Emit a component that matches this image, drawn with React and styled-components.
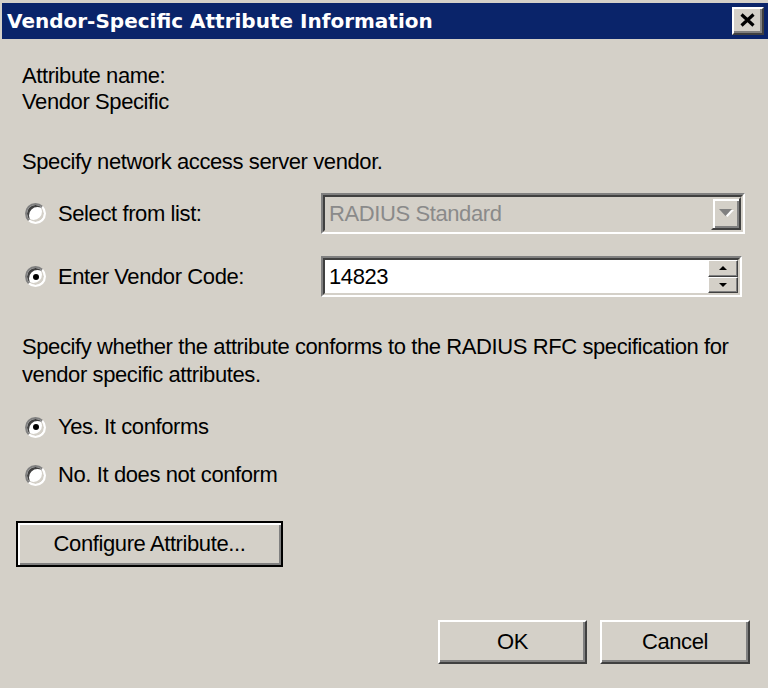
import React from "react";
import styled, { createGlobalStyle } from "styled-components";

const GlobalStyle = createGlobalStyle`
  html, body {
    margin: 0;
    padding: 0;
    background: #d4d0c8;
    overflow: hidden;
  }
  body {
    font-family: "Liberation Sans", Arial, sans-serif;
  }
`;

const Window = styled.div`
  width: 768px;
  height: 688px;
  box-sizing: border-box;
  padding: 3px 0 0 2px;
  background: #d4d0c8;
  display: flex;
  flex-direction: column;
`;

const TitleBar = styled.div`
  height: 36px;
  flex: none;
  background: #0a246a;
  display: flex;
  align-items: center;
  justify-content: space-between;
  padding: 0 4px 0 5px;
`;

const Title = styled.span`
  color: #fff;
  font-family: "DejaVu Sans", "Liberation Sans", sans-serif;
  font-weight: bold;
  font-size: 20px;
  white-space: nowrap;
`;

// classic raised bevel used by every push button
const bevel = `
  background: #d4d0c8;
  border: 2px solid;
  border-color: #fff #404040 #404040 #fff;
  box-shadow: inset -2px -2px 0 #808080;
`;

const CloseButton = styled.div`
  ${bevel}
  width: 32px;
  height: 28px;
  box-sizing: border-box;
  display: flex;
  align-items: center;
  justify-content: center;
  padding: 0 2px 2px 0;
`;

const Body = styled.div`
  flex: 1;
  display: flex;
  flex-direction: column;
  padding: 24px 16px 0 14px;
`;

const Line = styled.div`
  display: flex;
  align-items: center;
  height: ${(p) => p.$lh || 26}px;
  padding-left: 6px;
  margin-top: ${(p) => p.$mt || 0}px;
`;

const Text = styled.span`
  font-size: 22px;
  letter-spacing: -0.4px;
  white-space: nowrap;
  color: ${(p) => (p.$muted ? "#8a8a8a" : "#000")};
`;

const Choices = styled.div`
  display: grid;
  grid-template-columns: 305px 424px;
  grid-auto-rows: 41px;
  row-gap: 22px;
  margin-top: 18px;
`;

const RadioRow = styled.label`
  display: flex;
  align-items: center;
  gap: 12px;
  padding-left: 9px;
  height: ${(p) => (p.$h ? `${p.$h}px` : "auto")};
  margin-top: ${(p) => p.$mt || 0}px;
`;

const Radio = styled.span`
  flex: none;
  width: 21px;
  height: 21px;
  box-sizing: border-box;
  border-radius: 50%;
  border: 2px solid;
  border-color: #808080 #fff #fff #808080;
  background: #fff;
  box-shadow: inset 2px 2px 0 #404040, inset -2px -2px 0 #d4d0c8;
  display: flex;
  align-items: center;
  justify-content: center;

  &::after {
    content: "";
    width: 6px;
    height: 6px;
    border-radius: 50%;
    background: ${(p) => (p.$checked ? "#000" : "transparent")};
  }
`;

const Field = styled.div`
  width: ${(p) => p.$w}px;
  height: 41px;
  box-sizing: border-box;
  border: 2px solid;
  border-color: #808080 #fff #fff #808080;
`;

const FieldInner = styled.div`
  height: 100%;
  box-sizing: border-box;
  border: 2px solid;
  border-color: #404040 #d4d0c8 #d4d0c8 #404040;
  background: ${(p) => (p.$disabled ? "#d4d0c8" : "#fff")};
  display: flex;
  align-items: center;
  justify-content: space-between;
  padding-left: 4px;
`;

const DropButton = styled.div`
  ${bevel}
  width: 30px;
  height: 100%;
  box-sizing: border-box;
  border-color: #d4d0c8 #404040 #404040 #d4d0c8;
  box-shadow: inset 2px 2px 0 #fff, inset -2px -2px 0 #808080;
  display: flex;
  align-items: center;
  justify-content: center;
`;

const Spin = styled.div`
  width: 30px;
  height: 100%;
  display: flex;
  flex-direction: column;
`;

const SpinButton = styled.div`
  flex: 1;
  box-sizing: border-box;
  background: #d4d0c8;
  border: 1px solid;
  border-color: #fff #404040 #404040 #fff;
  box-shadow: inset -1px -1px 0 #808080;
  display: flex;
  align-items: center;
  justify-content: center;
`;

const Button = styled.div`
  ${bevel}
  width: ${(p) => p.$w}px;
  height: ${(p) => p.$h}px;
  box-sizing: border-box;
  display: flex;
  align-items: center;
  justify-content: center;
  ${(p) =>
    p.$default &&
    `
    border-color: #000;
    box-shadow: inset 2px 2px 0 #fff, inset -2px -2px 0 #808080;
  `}
`;

const ConfigureRow = styled.div`
  margin-top: 33px;
`;

const Footer = styled.div`
  display: flex;
  justify-content: flex-end;
  gap: 13px;
  margin-top: 53px;
  padding-right: 2px;
`;

const CloseIcon = () => (
  <svg width="15" height="14" viewBox="0 0 15 14">
    <path d="M1.5 1.5 L13.5 12.5 M13.5 1.5 L1.5 12.5" stroke="#000" strokeWidth="3.2" />
  </svg>
);

const DisabledArrow = () => (
  <svg width="15" height="9" viewBox="0 0 15 9">
    <polygon points="2,1 15,1 8.5,8" fill="#fff" />
    <polygon points="0,0 13,0 6.5,7" fill="#808080" />
  </svg>
);

const SmallArrow = ({ up }) => (
  <svg width="8" height="4" viewBox="0 0 8 4">
    <polygon points={up ? "4,0 8,4 0,4" : "0,0 8,0 4,4"} fill="#000" />
  </svg>
);

export default function App() {
  return (
    <>
      <GlobalStyle />
      <Window>
        <TitleBar>
          <Title>Vendor-Specific Attribute Information</Title>
          <CloseButton>
            <CloseIcon />
          </CloseButton>
        </TitleBar>
        <Body>
          <Line>
            <Text>Attribute name:</Text>
          </Line>
          <Line>
            <Text>Vendor Specific</Text>
          </Line>

          <Line $mt={34}>
            <Text>Specify network access server vendor.</Text>
          </Line>

          <Choices>
            <RadioRow>
              <Radio />
              <Text>Select from list:</Text>
            </RadioRow>
            <Field $w={424}>
              <FieldInner $disabled>
                <Text $muted>RADIUS Standard</Text>
                <DropButton>
                  <DisabledArrow />
                </DropButton>
              </FieldInner>
            </Field>

            <RadioRow>
              <Radio $checked />
              <Text>Enter Vendor Code:</Text>
            </RadioRow>
            <Field $w={421}>
              <FieldInner>
                <Text>14823</Text>
                <Spin>
                  <SpinButton>
                    <SmallArrow up />
                  </SpinButton>
                  <SpinButton>
                    <SmallArrow />
                  </SpinButton>
                </Spin>
              </FieldInner>
            </Field>
          </Choices>

          <Line $mt={36} $lh={28}>
            <Text>
              Specify whether the attribute conforms to the RADIUS RFC specification for
            </Text>
          </Line>
          <Line $lh={28}>
            <Text>vendor specific attributes.</Text>
          </Line>

          <RadioRow $h={26} $mt={25}>
            <Radio $checked />
            <Text>Yes. It conforms</Text>
          </RadioRow>
          <RadioRow $h={26} $mt={22}>
            <Radio />
            <Text>No. It does not conform</Text>
          </RadioRow>

          <ConfigureRow>
            <Button $default $w={267} $h={46}>
              <Text>Configure Attribute...</Text>
            </Button>
          </ConfigureRow>

          <Footer>
            <Button $w={149} $h={44}>
              <Text>OK</Text>
            </Button>
            <Button $w={150} $h={44}>
              <Text>Cancel</Text>
            </Button>
          </Footer>
        </Body>
      </Window>
    </>
  );
}
